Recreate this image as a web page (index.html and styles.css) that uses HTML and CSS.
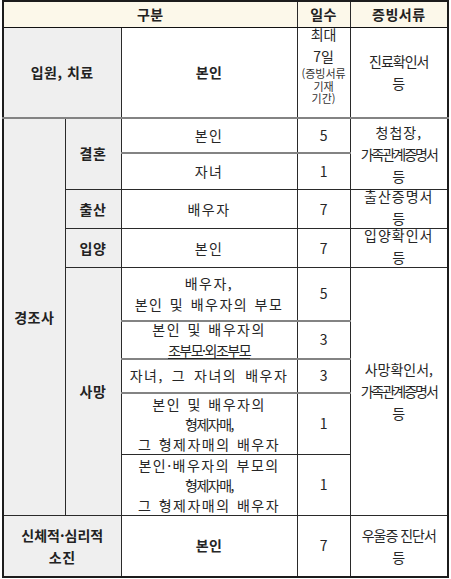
FILE: index.html
```html
<!DOCTYPE html>
<html lang="ko">
<head>
<meta charset="utf-8">
<title>휴가 기준</title>
<link rel="stylesheet" href="styles.css">
</head>
<body>
<table class="leave">
  <colgroup>
    <col class="c-cat"><col class="c-sub"><col class="c-who"><col class="c-days"><col class="c-doc">
  </colgroup>
  <thead>
    <tr class="r-head">
      <th colspan="3">구분</th>
      <th class="h-days">일수</th>
      <th class="h-doc">증빙서류</th>
    </tr>
  </thead>
  <tbody>
    <tr class="r-hosp">
      <th colspan="2" class="cat">입원, 치료</th>
      <td class="who strong">본인</td>
      <td class="days top">
        <div class="maxdays">
          <span class="big">최대</span>
          <span class="big">7일</span>
          <span class="small">(증빙서류</span>
          <span class="small">기재</span>
          <span class="small">기간)</span>
        </div>
      </td>
      <td class="doc"><span class="ls-n1">진료확인서</span><br>등</td>
    </tr>
    <tr class="r-m1">
      <th rowspan="9" class="cat">경조사</th>
      <th rowspan="2" class="sub">결혼</th>
      <td class="who">본인</td>
      <td class="days">5</td>
      <td rowspan="2" class="doc"><span class="ls-p1">청첩장,</span><br><span class="ls-n2">가족관계증명서</span><br>등</td>
    </tr>
    <tr class="r-m2">
      <td class="who">자녀</td>
      <td class="days">1</td>
    </tr>
    <tr class="r-birth">
      <th class="sub">출산</th>
      <td class="who">배우자</td>
      <td class="days">7</td>
      <td class="doc"><div class="squeeze up"><span class="ls-p1">출산증명서</span><br>등</div></td>
    </tr>
    <tr class="r-adopt">
      <th class="sub">입양</th>
      <td class="who">본인</td>
      <td class="days">7</td>
      <td class="doc"><div class="squeeze up"><span class="ls-p1">입양확인서</span><br>등</div></td>
    </tr>
    <tr class="r-d1">
      <th rowspan="5" class="sub">사망</th>
      <td class="who">배우자,<br>본인 및 배우자의 부모</td>
      <td class="days">5</td>
      <td rowspan="5" class="doc">사망확인서,<br><span class="ls-n2">가족관계증명서</span><br>등</td>
    </tr>
    <tr class="r-d2">
      <td class="who"><div class="squeeze">본인 및 배우자의<br><span class="tight ul">조부모·외조부모</span></div></td>
      <td class="days">3</td>
    </tr>
    <tr class="r-d3">
      <td class="who wide">자녀, 그 자녀의 배우자</td>
      <td class="days">3</td>
    </tr>
    <tr class="r-d4">
      <td class="who three">본인 및 배우자의<br><span class="tight">형제자매,</span><br>그 형제자매의 배우자</td>
      <td class="days">1</td>
    </tr>
    <tr class="r-d5">
      <td class="who three">본인·배우자의 부모의<br><span class="tight">형제자매,</span><br>그 형제자매의 배우자</td>
      <td class="days">1</td>
    </tr>
    <tr class="r-burn">
      <th colspan="2" class="cat"><span class="semi">신체적·심리적</span><br>소진</th>
      <td class="who strong">본인</td>
      <td class="days">7</td>
      <td class="doc"><span class="ls-n1">우울증 진단서</span><br>등</td>
    </tr>
  </tbody>
</table>
</body>
</html>
```

FILE: styles.css
```css
html, body {
  margin: 0;
  background: #ffffff;
}

body {
  padding: 0 0 0 2px;
  font-family: "Noto Sans CJK KR", "Malgun Gothic", sans-serif;
  color: #222222;
}

.leave {
  border-collapse: collapse;
  table-layout: fixed;
  width: 445px;
  border: 2px solid #1c1c1c;
  font-size: 14px;
  line-height: 21px;
}

.c-cat { width: 62px; }
.c-sub { width: 56px; }
.c-who { width: 176px; }
.c-days { width: 53px; }
.c-doc { width: 98px; }

.leave th,
.leave td {
  padding: 0 1px;
  text-align: center;
  vertical-align: middle;
  border: 1px solid #2a2a2a;
  white-space: nowrap;
  overflow: visible;
}

/* header row */
.r-head th {
  height: 25px;
  background: #fcf8ea;
  font-weight: 700;
  letter-spacing: 0.5px;
  border-bottom: 1px solid #111111;
}

/* row heights */
.r-hosp { height: 90px; }
.r-m1 { height: 35px; }
.r-m2 { height: 37px; }
.r-birth { height: 39px; }
.r-adopt { height: 39px; }
.r-d1 { height: 53px; }
.r-d2 { height: 38px; }
.r-d3 { height: 34px; }
.r-d4 { height: 61px; }
.r-d5 { height: 61px; }
.r-burn { height: 62px; }

/* category cells */
.cat,
.sub {
  background: #efefef;
  font-weight: 700;
  letter-spacing: 0.5px;
}

.cat { line-height: 22px; }

/* who column */
.who {
  letter-spacing: 1.5px;
  word-spacing: 1px;
  border-left: 2px solid #838383;
  border-right: 2px solid #838383;
  color: #262626;
}

.who.wide { word-spacing: 2.5px; }

.who.strong {
  font-weight: 700;
  letter-spacing: 0.5px;
}

.who.three { line-height: 20px; }

.days {
  color: #262626;
  border-right: 1px solid #1a1a1a;
}

.days.top { vertical-align: top; }

.doc {
  line-height: 22px;
  color: #262626;
}

/* gray horizontal rules */
.r-hosp th,
.r-hosp td { border-bottom: 2px solid #838383; }

.r-m1 .who,
.r-m1 .days,
.r-d1 .who,
.r-d1 .days,
.r-d2 .who,
.r-d2 .days,
.r-d3 .who,
.r-d3 .days { border-bottom: 2px solid #838383; }

/* max days column */
.maxdays {
  margin-top: -4px;
}

.maxdays .big {
  display: block;
  line-height: 21.5px;
}

.maxdays .small {
  display: block;
  font-size: 11px;
  line-height: 12.5px;
  letter-spacing: 0;
  color: #333333;
}

.squeeze { margin: -4px 0; }
.squeeze.up { margin: -6px 0 -2px; }

.tight { letter-spacing: -1.5px; }
.semi { letter-spacing: 0; }
.ul {
  text-decoration: underline;
  text-underline-offset: 2px;
  text-decoration-thickness: 1px;
}

.ls-n1 { letter-spacing: -1px; }
.ls-n2 { letter-spacing: -2px; }
.ls-p1 { letter-spacing: 1px; }
```
